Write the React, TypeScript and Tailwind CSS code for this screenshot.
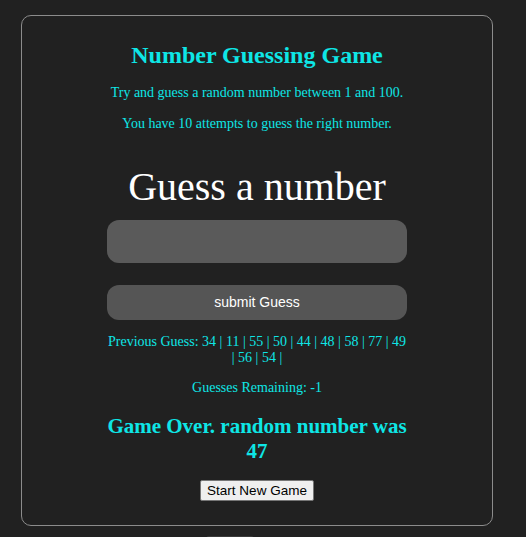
import React from 'react';

const guesses = [34, 11, 55, 50, 44, 48, 58, 77, 49, 56, 54];

export default function App() {
  return (
    <div className="min-h-[537px] bg-[#212121] pt-[15px] pl-[21px] overflow-hidden font-['Liberation_Serif',serif]">
      <div className="w-[472px] h-[511px] border border-[#8c8c8c] rounded-[10px] flex flex-col items-center pt-[25px] text-center">
        <h2 className="text-[24px] leading-[28px] font-bold text-[#0ee6e6]">Number Guessing Game</h2>
        <p className="mt-[16px] text-[14px] leading-[16px] text-[#0ee6e6]">Try and guess a random number between 1 and 100.</p>
        <p className="mt-[15px] text-[14px] leading-[16px] text-[#0ee6e6]">You have 10 attempts to guess the right number.</p>

        <h1 className="mt-[32px] text-[40px] leading-[46px] text-white">Guess a number</h1>
        <input type="text" className="mt-[10px] w-[300px] h-[43px] rounded-[12px] bg-[#5a5a5a] outline-none border-0" />
        <button className="mt-[22px] w-[300px] h-[35px] rounded-[12px] bg-[#555555] text-white text-[14px] font-['Liberation_Sans',sans-serif]">
          submit Guess
        </button>

        <p className="mt-[14px] w-[300px] text-[14px] leading-[16px] text-[#0ee6e6]">
          Previous Guess: {guesses.map((g) => `${g} | `).join('')}
        </p>
        <p className="mt-[14px] text-[14px] leading-[16px] text-[#0ee6e6]">Guesses Remaining: -1</p>

        <h2 className="mt-[18px] w-[300px] text-[21px] leading-[25px] font-bold text-[#0ee6e6]">
          Game Over. random number was 47
        </h2>
        <button className="mt-[16px] h-[21px] px-[6px] bg-[#efefef] border border-[#767676] rounded-[2px] text-[13.5px] leading-[15px] text-black font-['Liberation_Sans',sans-serif]">
          Start New Game
        </button>
      </div>
      <div className="ml-[185px] mt-[10px] w-[48px] h-[10px] bg-[#3a3a3a] rounded-t-[3px]" />
    </div>
  );
}
